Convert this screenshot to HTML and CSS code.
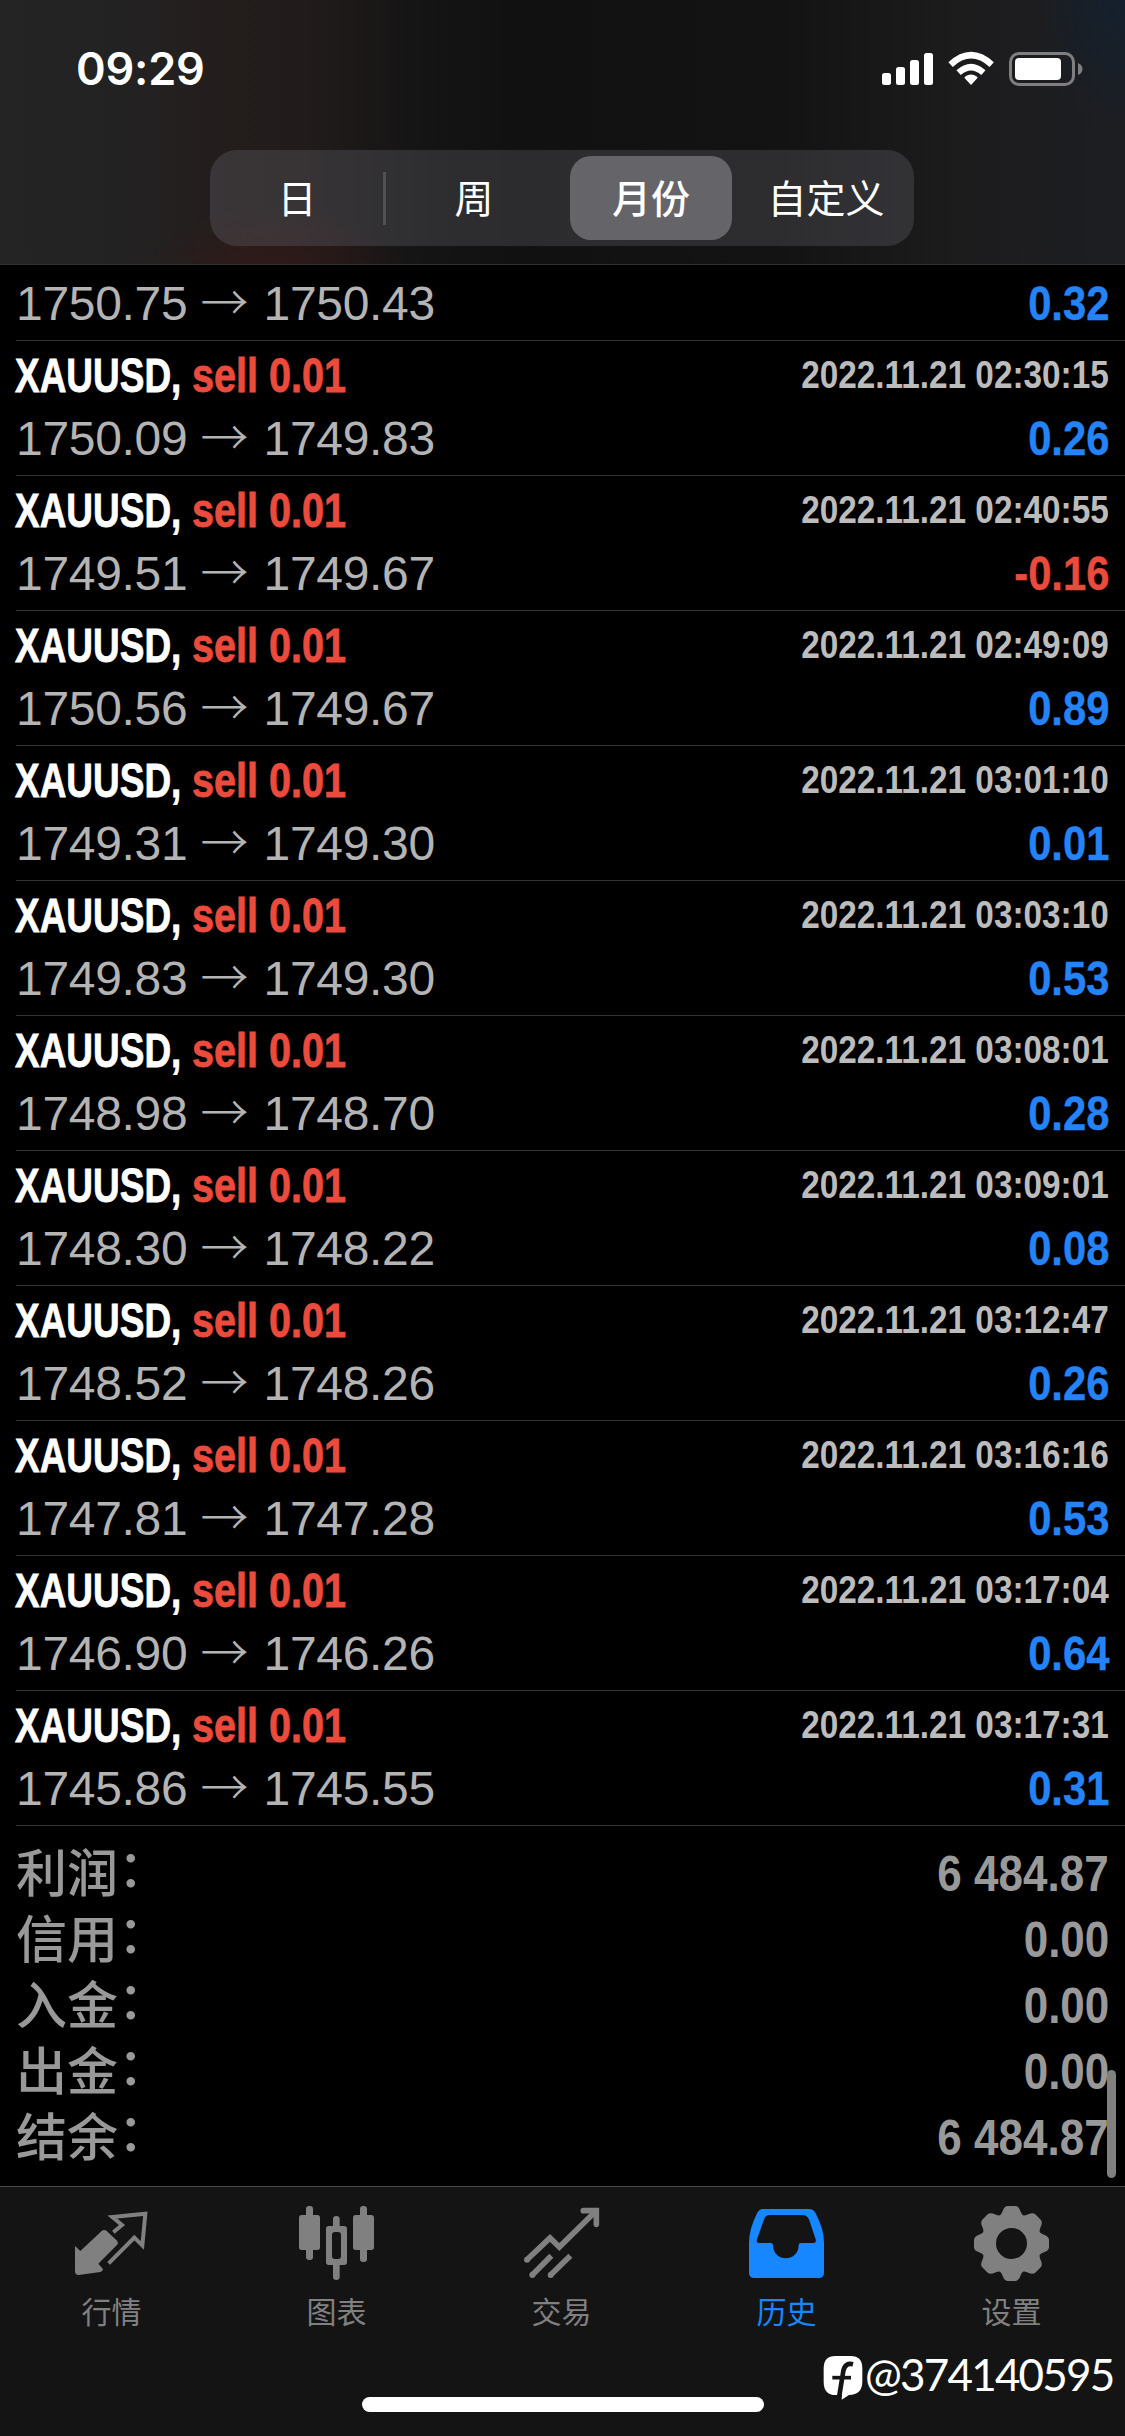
FILE: index.html
```html
<!DOCTYPE html>
<html lang="zh-CN">
<head>
<meta charset="utf-8">
<title>历史</title>
<link rel="stylesheet" href="styles.css">
</head>
<body>
<div class="screen">
  <header class="top">
    <div class="status">
      <span class="clock">09:29</span>
      <svg class="status-icons" viewBox="882 50 202 38" width="202" height="38">
        <g fill="#fff">
          <rect x="882" y="73" width="9" height="12" rx="2.5"/>
          <rect x="896" y="67" width="9" height="18" rx="2.5"/>
          <rect x="910" y="60" width="9" height="25" rx="2.5"/>
          <rect x="924" y="53" width="9" height="32" rx="2.5"/>
          <path d="M971 85 L965 78.6 Q963.800 77.300 965.200 76.400 Q971 72.600 976.800 76.400 Q978.200 77.300 977 78.600 Z"/>
        </g>
        <g fill="none" stroke="#fff" stroke-width="6.4">
          <path d="M958.600 72.600 Q971 61.500 983.400 72.600"/>
          <path d="M950.600 64.600 Q971 45.800 991.700 64.600"/>
        </g>
        <rect x="1010.500" y="53.500" width="63" height="31" rx="8.500" fill="none" stroke="#7f7f81" stroke-width="3"/>
        <rect x="1015" y="58" width="46" height="22" rx="4" fill="#fff"/>
        <path d="M1078 63 Q1082.500 65 1082.500 69 Q1082.500 73 1078 75 Z" fill="#7f7f81"/>
      </svg>
    </div>
    <nav class="segments">
      <span class="segment divided">日</span>
      <span class="segment">周</span>
      <span class="segment chosen">月份</span>
      <span class="segment">自定义</span>
    </nav>
  </header>

  <main class="history">
    <div class="deal partial"><span class="price">1750.75 <i>→</i> 1750.43</span><b class="gain">0.32</b></div>
    <div class="deal"><span class="title"><b class="symbol">XAUUSD,</b><b class="side">sell 0.01</b></span><b class="date">2022.11.21 02:30:15</b><span class="price">1750.09 <i>→</i> 1749.83</span><b class="gain">0.26</b></div>
    <div class="deal"><span class="title"><b class="symbol">XAUUSD,</b><b class="side">sell 0.01</b></span><b class="date">2022.11.21 02:40:55</b><span class="price">1749.51 <i>→</i> 1749.67</span><b class="gain loss">-0.16</b></div>
    <div class="deal"><span class="title"><b class="symbol">XAUUSD,</b><b class="side">sell 0.01</b></span><b class="date">2022.11.21 02:49:09</b><span class="price">1750.56 <i>→</i> 1749.67</span><b class="gain">0.89</b></div>
    <div class="deal"><span class="title"><b class="symbol">XAUUSD,</b><b class="side">sell 0.01</b></span><b class="date">2022.11.21 03:01:10</b><span class="price">1749.31 <i>→</i> 1749.30</span><b class="gain">0.01</b></div>
    <div class="deal"><span class="title"><b class="symbol">XAUUSD,</b><b class="side">sell 0.01</b></span><b class="date">2022.11.21 03:03:10</b><span class="price">1749.83 <i>→</i> 1749.30</span><b class="gain">0.53</b></div>
    <div class="deal"><span class="title"><b class="symbol">XAUUSD,</b><b class="side">sell 0.01</b></span><b class="date">2022.11.21 03:08:01</b><span class="price">1748.98 <i>→</i> 1748.70</span><b class="gain">0.28</b></div>
    <div class="deal"><span class="title"><b class="symbol">XAUUSD,</b><b class="side">sell 0.01</b></span><b class="date">2022.11.21 03:09:01</b><span class="price">1748.30 <i>→</i> 1748.22</span><b class="gain">0.08</b></div>
    <div class="deal"><span class="title"><b class="symbol">XAUUSD,</b><b class="side">sell 0.01</b></span><b class="date">2022.11.21 03:12:47</b><span class="price">1748.52 <i>→</i> 1748.26</span><b class="gain">0.26</b></div>
    <div class="deal"><span class="title"><b class="symbol">XAUUSD,</b><b class="side">sell 0.01</b></span><b class="date">2022.11.21 03:16:16</b><span class="price">1747.81 <i>→</i> 1747.28</span><b class="gain">0.53</b></div>
    <div class="deal"><span class="title"><b class="symbol">XAUUSD,</b><b class="side">sell 0.01</b></span><b class="date">2022.11.21 03:17:04</b><span class="price">1746.90 <i>→</i> 1746.26</span><b class="gain">0.64</b></div>
    <div class="deal"><span class="title"><b class="symbol">XAUUSD,</b><b class="side">sell 0.01</b></span><b class="date">2022.11.21 03:17:31</b><span class="price">1745.86 <i>→</i> 1745.55</span><b class="gain">0.31</b></div>
    <dl class="totals">
      <div class="total"><dt>利润<span class="colon">：</span></dt><dd>6 484.87</dd></div>
      <div class="total"><dt>信用<span class="colon">：</span></dt><dd>0.00</dd></div>
      <div class="total"><dt>入金<span class="colon">：</span></dt><dd>0.00</dd></div>
      <div class="total"><dt>出金<span class="colon">：</span></dt><dd>0.00</dd></div>
      <div class="total"><dt>结余<span class="colon">：</span></dt><dd>6 484.87</dd></div>
    </dl>
    <div class="scrollbar"></div>
  </main>

  <footer class="bottom">
    <nav class="tabs">
      <div class="tab">
        <svg viewBox="0 3 315 270" width="105" height="90" fill="currentColor">
          <path d="M45 153 L61 168 L125 108 Q133 102 141 109 L171 137 Q177 144 170 151 L115 206 L129 222 Q128 230 121 231 L56 240 Q45 240 45 229 Z"/>
          <path d="M160 112 L186 90 L157 66 L256 56 L247 151 L223 128 L146 205" fill="none" stroke="currentColor" stroke-width="12"/>
        </svg>
        <span>行情</span>
      </div>
      <div class="tab">
        <svg viewBox="675 3 315 270" width="105" height="90" fill="currentColor">
          <rect x="717" y="60" width="63" height="105" rx="8"/>
          <rect x="738" y="33" width="21" height="162" rx="9"/>
          <rect x="879" y="60" width="63" height="105" rx="8"/>
          <rect x="900" y="33" width="21" height="168" rx="9"/>
          <path d="M819 93 V72 Q819 63 829 63 Q839 63 839 72 V93 H852 Q861 93 861 101 V202 Q861 210 852 210 H839 V246 Q839 255 829 255 Q819 255 819 246 V210 H806 Q798 210 798 202 V101 Q798 93 806 93 Z M825 111 Q816 111 816 120 V183 Q816 192 825 192 H834 Q843 192 843 183 V120 Q843 111 834 111 Z" fill-rule="evenodd"/>
        </svg>
        <span>图表</span>
      </div>
      <div class="tab">
        <svg viewBox="0 3 315 270" width="105" height="90" fill="none" stroke="currentColor" stroke-width="17">
          <path d="M50 195 L120 129 L148 156 L254 52" />
          <path d="M220 47 H259 V88" stroke-linecap="round"/>
          <path d="M124 182 L66 241 M181 182 L121 241"/>
          <g fill="currentColor" stroke="none"><circle cx="51" cy="194" r="9"/><circle cx="67" cy="240" r="9"/><circle cx="122" cy="240" r="9"/></g>
        </svg>
        <span>交易</span>
      </div>
      <div class="tab active">
        <svg viewBox="675 3 315 270" width="105" height="90" fill="currentColor">
          <path fill-rule="evenodd" d="M758 42 H896 Q911 42 917 55 Q942 104 942 143 V233 Q942 249 926 249 H733 Q717 249 717 233 V143 Q717 104 741 55 Q748 42 758 42 Z M779 60 Q767 60 763 71 L741 133 Q738 144 750 144 H782 Q789 144 789 151 C790 203 865 203 866 151 Q866 144 873 144 H908 Q920 144 917 133 L898 76 Q892 60 877 60 Z"/>
        </svg>
        <span>历史</span>
      </div>
      <div class="tab">
        <svg viewBox="450 3 315 270" width="105" height="90" fill="currentColor">
          <defs><path id="tooth" d="M560 68 Q573 62 578 48 Q583 33 594 33 H615 Q626 33 631 48 Q636 62 649 68 V90 H560 Z"/></defs>
          <circle cx="604.500" cy="145.500" r="68" fill="none" stroke="currentColor" stroke-width="43"/>
          <use href="#tooth"/>
          <use href="#tooth" transform="rotate(45 604.500 145.500)"/>
          <use href="#tooth" transform="rotate(90 604.500 145.500)"/>
          <use href="#tooth" transform="rotate(135 604.500 145.500)"/>
          <use href="#tooth" transform="rotate(180 604.500 145.500)"/>
          <use href="#tooth" transform="rotate(225 604.500 145.500)"/>
          <use href="#tooth" transform="rotate(270 604.500 145.500)"/>
          <use href="#tooth" transform="rotate(315 604.500 145.500)"/>
        </svg>
        <span>设置</span>
      </div>
    </nav>
    <div class="home-bar"></div>
    <div class="credit">
      <svg viewBox="38 480 120 138" width="40" height="46">
        <path d="M75 483 H121 Q156 483 156 520 V560 Q156 598 116 600 L94 614 L95 600 H76 Q40 600 40 560 V520 Q40 483 75 483 Z" fill="#fff"/>
        <path d="M128 508 Q104 502 99 528 L87 602" fill="none" stroke="#141414" stroke-width="14"/>
        <path d="M66 548 H122" stroke="#141414" stroke-width="11"/>
      </svg>
      <span class="handle">@374140595</span>
    </div>
  </footer>
</div>
</body>
</html>
```
FILE: styles.css
```css
* { box-sizing: border-box; }
body { margin: 0; background: #000; }
.screen {
  width: 1125px;
  height: 2436px;
  display: flex;
  flex-direction: column;
  overflow: hidden;
  background: #000;
  font-family: "Liberation Sans", "Noto Sans CJK SC", sans-serif;
}

/* Header */
.top {
  height: 265px;
  border-bottom: 1px solid #303030;
  background:
    radial-gradient(ellipse 90px 130px at 1125px 0, #14202e, transparent),
    radial-gradient(ellipse 130px 70px at 275px 275px, rgba(64, 22, 20, .5), transparent),
    linear-gradient(90deg, #242424 0, #232222 130px, #231d1c 230px, #211c1b 300px, #141414 430px, #111 520px, #131313 780px, #1c1c1d 960px, #1d1e22 1125px);
}
.status {
  height: 150px;
  padding: 49px 41px 0 76px;
  display: flex;
  justify-content: space-between;
  align-items: flex-start;
}
.clock {
  font: 600 45px/40px Inter, sans-serif;
  letter-spacing: -.2px;
  color: #fff;
}
.status-icons { margin-top: 1px; }
.segments {
  width: 704px;
  height: 96px;
  margin-left: 210px;
  display: grid;
  grid-template-columns: repeat(4, 176px);
  border-radius: 27px;
  background: rgba(118, 118, 128, .27);
}
.segment {
  display: flex;
  align-items: center;
  justify-content: center;
  padding-bottom: 4px;
  font: 400 39px/60px "Noto Sans CJK SC", sans-serif;
  color: #fff;
}
.divided {
  padding-right: 2px;
  background: linear-gradient(#505055, #505055) right center / 3px 53px no-repeat;
}
.chosen {
  margin: 6px 6px 6px 8px;
  border-radius: 21px;
  background: #656469;
  font-weight: 500;
}

/* Deals */
.history {
  position: relative;
  height: 1921px;
}
.deal {
  height: 135px;
  margin-left: 16px;
  padding: 3px 16px 0 0;
  display: grid;
  grid-template-columns: 1fr auto;
  grid-template-rows: 63px 63px;
  border-bottom: 1px solid #333;
  font-size: 48px;
  line-height: 63px;
  white-space: nowrap;
}
.partial {
  height: 76px;
  padding-top: 7px;
  grid-template-rows: 63px;
}
.title { display: flex; }
.symbol {
  width: 176px;
  color: #fff;
  -webkit-text-stroke: .8px #fff;
  transform: translateX(-1px) scaleX(.77);
  transform-origin: left;
}
.side {
  color: #eb4b3d;
  -webkit-text-stroke: .8px #eb4b3d;
  transform: scaleX(.825);
  transform-origin: left;
}
.date {
  font-size: 38px;
  color: #bcbcbc;
  transform: scaleX(.877);
  transform-origin: right;
}
.price {
  color: #b4b4b4;
  letter-spacing: -.3px;
}
.price i {
  display: inline-block;
  width: 50px;
  line-height: 40px;
  font-family: "Noto Sans CJK SC", sans-serif;
  font-style: normal;
  font-weight: 300;
}
.gain {
  justify-self: end;
  color: #2484f7;
  -webkit-text-stroke: .4px currentColor;
  transform: scaleX(.87);
  transform-origin: right;
}
.loss { color: #eb4b3d; }

/* Totals */
.totals {
  margin: 0;
  padding: 15px 16px 0;
  color: #999;
}
.total {
  height: 66px;
  display: flex;
  justify-content: space-between;
  line-height: 66px;
}
.total dt {
  margin-top: -4px;
  font: 500 51px/66px "Noto Sans CJK SC", sans-serif;
}
.colon {
  display: inline-block;
  transform: translateY(-5px);
}
.total dd {
  margin: 0;
  font-size: 50px;
  font-weight: 700;
  transform: scaleX(.88);
  transform-origin: right;
}
.scrollbar {
  position: absolute;
  right: 9px;
  bottom: 8px;
  width: 9px;
  height: 108px;
  border-radius: 5px;
  background: #808080;
}

/* Tab bar */
.bottom {
  position: relative;
  height: 250px;
  border-top: 1px solid #4a4a4a;
  background: #141414;
}
.tabs {
  height: 210px;
  padding-top: 9px;
  display: grid;
  grid-template-columns: repeat(5, 225px);
}
.tab {
  display: flex;
  flex-direction: column;
  align-items: center;
  color: #808080;
  font: 400 30px/48px "Noto Sans CJK SC", sans-serif;
}
.tab span { margin-right: 2px; }
.active { color: #1687ff; }
.home-bar {
  width: 402px;
  height: 15px;
  margin-left: 362px;
  border-radius: 8px;
  background: #fff;
}
.credit {
  position: absolute;
  left: 823px;
  top: 168px;
  display: flex;
  align-items: flex-start;
  gap: 2px;
  color: #fff;
}
.handle {
  margin-top: -3px;
  font: 400 44px/44px Lato, sans-serif;
  letter-spacing: -1.8px;
}
```
